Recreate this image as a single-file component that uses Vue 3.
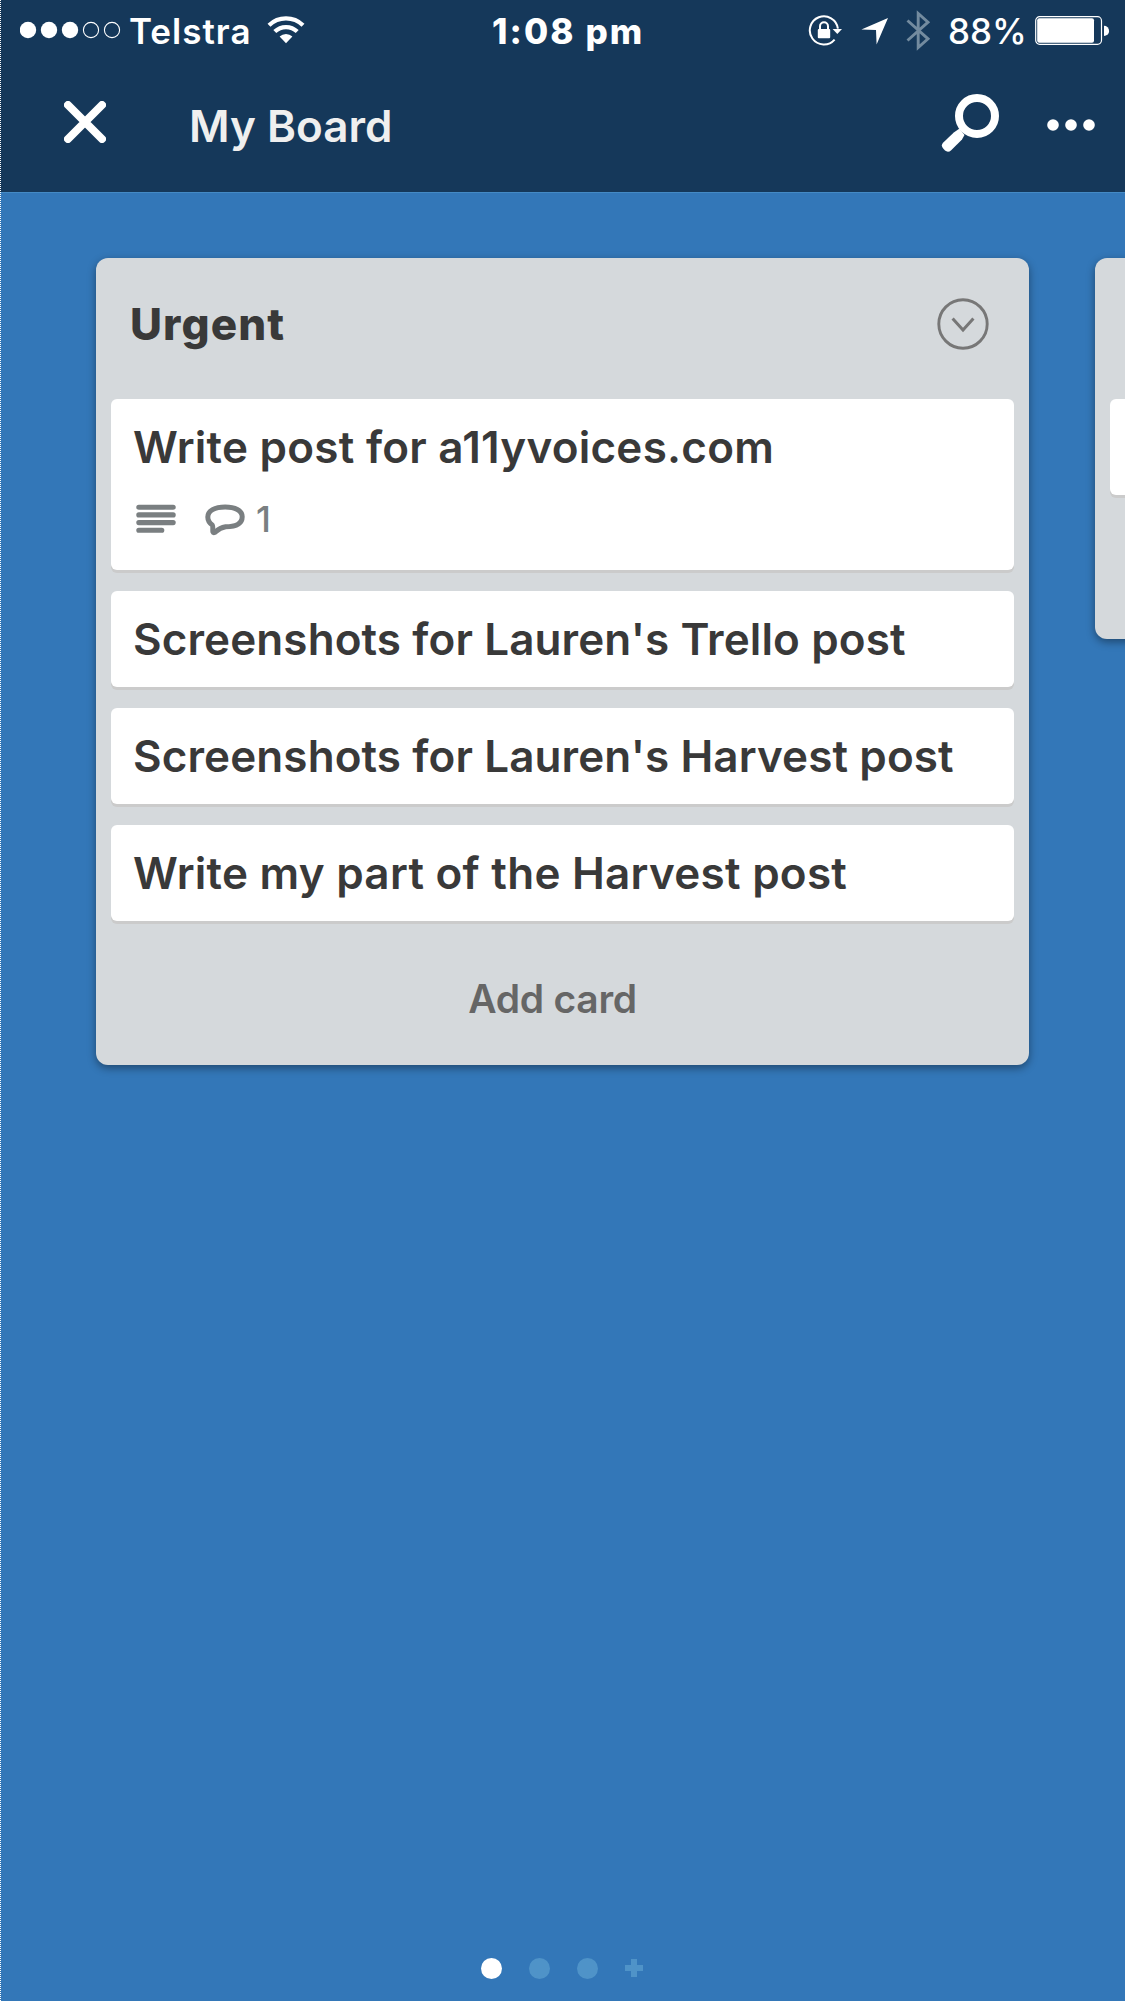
<script setup>
const signal = [true, true, true, false, false]
const cards = [
  { title: 'Write post for a11yvoices.com', description: true, comments: 1, loose: true },
  { title: "Screenshots for Lauren's Trello post" },
  { title: "Screenshots for Lauren's Harvest post" },
  { title: 'Write my part of the Harvest post', loose: true },
]
</script>

<template>
  <div class="screen">
    <header class="top">
      <div class="status">
        <div class="carrier">
          <svg class="signal" width="101" height="18" viewBox="0 0 101 18">
            <template v-for="(on, i) in signal" :key="i">
              <circle v-if="on" :cx="8 + i * 21" cy="9" r="8.2" fill="#fff" />
              <circle v-else :cx="8 + i * 21" cy="9" r="7.6" fill="none" stroke="#fff" stroke-width="1.1" />
            </template>
          </svg>
          <span class="carrier-name">Telstra</span>
          <svg class="wifi" width="38" height="28" viewBox="0 0 38 28">
            <g fill="none" stroke="#fff" stroke-width="4.2">
              <path d="M2 9.2A24.5 24.5 0 0 1 36 9.2" />
              <path d="M7.8 15.6A16 16 0 0 1 30.2 15.6" />
            </g>
            <path d="M19 27.2L12.6 20.6A9.3 9.3 0 0 1 25.4 20.6Z" fill="#fff" />
          </svg>
        </div>
        <div class="time">1:08 pm</div>
        <div class="indicators">
          <svg class="lock" width="36" height="32" viewBox="0 0 36 32">
            <path d="M29.9 13.6A14.1 14.1 0 1 0 26.6 24.6" fill="none" stroke="#fff" stroke-width="2" />
            <path d="M24.6 14H34L29.3 19Z" fill="#fff" />
            <rect x="9.8" y="14" width="12.4" height="9.2" rx="1" fill="#fff" />
            <path d="M12 15V11.2a4 4 0 0 1 8 0V15" fill="none" stroke="#fff" stroke-width="2" />
          </svg>
          <svg class="location" width="28" height="28" viewBox="0 0 28 28">
            <path d="M27 1L15.6 27.4L15 13L.4 12.6Z" fill="#fff" />
          </svg>
          <svg class="bluetooth" width="26" height="42" viewBox="0 0 26 42">
            <path d="M1.5 10.5L22 28.8L12.2 37.5V3.5L22 12.2L1.5 30.5" fill="none" stroke="#738b9f" stroke-width="2.9" stroke-linejoin="miter" />
          </svg>
          <span class="percent">88%</span>
          <svg class="battery" width="75" height="30" viewBox="0 0 75 30">
            <rect x=".7" y=".7" width="65.8" height="27.6" rx="4" fill="none" stroke="#fff" stroke-width="1.2" />
            <rect x="2.2" y="2.2" width="56.8" height="24.6" rx="2" fill="#fff" />
            <path d="M69 9.8A5 5 0 0 1 69 20Z" fill="#fff" />
          </svg>
        </div>
      </div>
      <div class="nav">
        <svg class="close" width="42" height="42" viewBox="0 0 42 42">
          <path d="M4 4L38 38M38 4L4 38" stroke="#fff" stroke-width="8" stroke-linecap="round" />
        </svg>
        <h1 class="title">My Board</h1>
        <svg class="search" width="60" height="60" viewBox="0 0 60 60">
          <circle cx="36" cy="22" r="18" fill="none" stroke="#fff" stroke-width="8" />
          <path d="M18.5 34.5L23.5 41L21 45.5L10.2 56.2Q7.2 59 4 56.6L2.2 54.6Q-.6 51.4 2.3 48.4L12.8 38.4Z" fill="#fff" />
        </svg>
        <svg class="more" width="48" height="12" viewBox="0 0 48 12">
          <circle v-for="x in [6, 24, 42]" :key="x" :cx="x" cy="6" r="5.8" fill="#fff" />
        </svg>
      </div>
    </header>

    <main class="board">
      <section class="list">
        <div class="list-head">
          <h2 class="list-title">Urgent</h2>
          <svg width="52" height="52" viewBox="0 0 52 52" fill="none" stroke="#777">
            <circle cx="26" cy="26" r="24.2" stroke-width="2.9" />
            <path d="M15.6 20.4L26 32L36.4 20.4" stroke-width="3" />
          </svg>
        </div>
        <div class="cards">
          <article v-for="card in cards" :key="card.title" class="card">
            <div class="card-title" :class="{ loose: card.loose }">{{ card.title }}</div>
            <div v-if="card.description" class="badges">
              <svg width="40" height="30" viewBox="0 0 40 30" stroke="#7a7f81" stroke-width="5.1" stroke-linecap="round">
                <path d="M2.8 3.2H37.2M2.8 10.9H37.2M2.8 18.6H37.2M2.8 26.3H25.8" />
              </svg>
              <svg class="comment" width="40" height="32" viewBox="0 0 40 32">
                <path d="M20.2 3C9.8 3 2.8 6.8 2.8 13C2.8 17.2 4.9 19.3 7.3 21C8.3 23 7.5 26 7.9 27.8C8.4 29.2 9.9 28.6 11.1 27.4C13.5 25 16.6 23.5 20.6 22.8C30.5 22.7 37.2 19.6 37.2 12.7C37.2 6.4 29.8 3 20.2 3Z" fill="none" stroke="#7a7f81" stroke-width="5" stroke-linejoin="round" />
              </svg>
              <span class="count">{{ card.comments }}</span>
            </div>
          </article>
        </div>
        <div class="add">Add card</div>
      </section>
      <section class="list next">
        <div class="list-head"></div>
        <div class="cards">
          <article class="card"><div class="card-title"></div></article>
        </div>
      </section>
    </main>

    <footer class="pager">
      <i class="dot active"></i>
      <i class="dot"></i>
      <i class="dot"></i>
      <svg width="18" height="18" viewBox="0 0 18 18"><path d="M6 0H12V6H18V12H12V18H6V12H0V6H6Z" fill="#4f93c8" /></svg>
    </footer>
    <div class="edge"></div>
  </div>
</template>

<style>
body { margin: 0; }
</style>

<style scoped>
.screen {
  position: relative;
  display: flex;
  flex-direction: column;
  width: 1125px;
  height: 2001px;
  overflow: hidden;
  background: #3377b8;
  font-family: Inter, "Liberation Sans", sans-serif;
  color: #393939;
}
svg { display: block; flex: none; }
h1, h2 { margin: 0; }
.edge {
  position: absolute;
  inset: 0 auto 0 0;
  width: 1px;
  background: repeating-linear-gradient(#fff 0 1px, transparent 1px 2px);
}
.top {
  box-sizing: border-box;
  flex: none;
  height: 193px;
  background: #15385a;
  border-bottom: 1px solid #448ac5;
  color: #fff;
}
.status {
  display: flex;
  align-items: center;
  height: 62px;
  font-size: 35px;
  font-weight: 560;
  line-height: 62px;
  white-space: nowrap;
}
.carrier { display: flex; align-items: center; width: 492px; }
.signal { margin: -2px 8px 0 20px; }
.carrier-name { width: 138px; letter-spacing: 1px; }
.wifi { margin-top: -3px; }
.time { width: 316px; font-weight: 770; letter-spacing: 2.1px; }
.indicators { display: flex; align-items: center; }
.lock { margin-top: -1px; }
.location { margin: 0 17px 0 17px; }
.bluetooth { margin-right: 16px; }
.percent { width: 87px; font-weight: 520; }
.nav { display: flex; align-items: center; height: 128px; }
.close { margin: -8px 83px 0 64px; }
.title {
  width: 752px;
  color: #efefef;
  font-size: 44px;
  font-weight: 560;
  line-height: 60px;
}
.search { margin-top: -4px; }
.more { margin: -2px 0 0 46px; }
.board {
  display: flex;
  align-items: flex-start;
  flex: 1;
  gap: 66px;
  padding: 65px 0 0 96px;
}
.list {
  box-sizing: border-box;
  flex: none;
  width: 933px;
  height: 807px;
  padding: 0 15px;
  border-radius: 12px;
  background: #d5d9dc;
  box-shadow: 0 3px 8px rgba(0, 0, 0, .4);
}
.next { height: 381px; }
.list-head {
  display: flex;
  align-items: center;
  justify-content: space-between;
  height: 132px;
  margin-bottom: 9px;
  padding: 0 25px 0 19px;
}
.list-title { font-size: 44px; font-weight: 800; letter-spacing: 1.1px; }
.cards { display: flex; flex-direction: column; gap: 21px; }
.card {
  min-height: 96px;
  border-radius: 6px;
  background: #fff;
  box-shadow: 0 3px 0 #cbcbcb;
}
.card-title {
  height: 96px;
  padding-left: 22px;
  font-size: 44px;
  font-weight: 575;
  letter-spacing: .11px;
  line-height: 96px;
  white-space: nowrap;
}
.loose { letter-spacing: .26px; }
.badges {
  display: flex;
  align-items: center;
  height: 48px;
  padding: 0 0 27px 25px;
  color: #7a7f81;
}
.comment { margin: 2px 0 0 29px; }
.count { margin-left: 11px; font-size: 36px; font-weight: 500; line-height: 48px; }
.add {
  height: 132px;
  margin-top: 12px;
  padding-right: 20px;
  color: #666;
  font-size: 39px;
  font-weight: 575;
  letter-spacing: -.25px;
  line-height: 132px;
  text-align: center;
}
.pager {
  display: flex;
  align-items: center;
  flex: none;
  gap: 27px;
  height: 66px;
  padding-left: 481px;
}
.dot { width: 21px; height: 21px; border-radius: 50%; background: #4f93c8; }
.active { background: #fff; }
</style>
